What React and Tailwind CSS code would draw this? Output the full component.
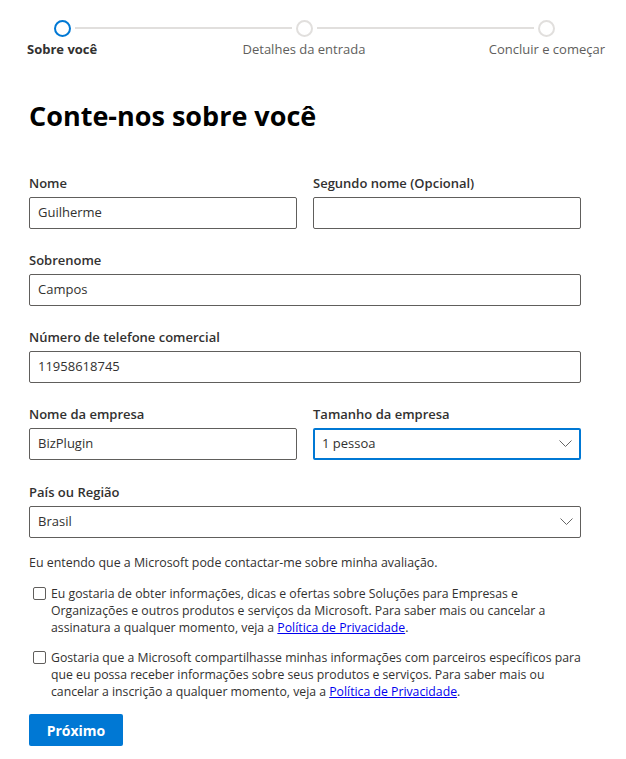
import React from "react";

const font = { fontFamily: '"Segoe UI", "Open Sans", "Noto Sans", sans-serif' };

function Chevron() {
  return (
    <svg width="13" height="8" viewBox="0 0 13 8" className="absolute right-[7px] top-1/2 -translate-y-1/2">
      <path d="M0.5 0.5 L6.5 6.5 L12.5 0.5" fill="none" stroke="#666" strokeWidth="1" />
    </svg>
  );
}

function Field({ label, value, className = "" }) {
  return (
    <div className={"flex flex-col " + className}>
      <label className="text-[13px] font-semibold text-[#323130] leading-[18px] mb-[5px]">{label}</label>
      <div className="h-[32px] border border-[#605e5c] rounded-[2px] flex items-center px-[8px] text-[13px] text-[#323130]">
        {value}
      </div>
    </div>
  );
}

function SelectField({ label, value, focused, className = "" }) {
  return (
    <div className={"flex flex-col " + className}>
      <label className="text-[13px] font-semibold text-[#323130] leading-[18px] mb-[5px]">{label}</label>
      <div
        className={
          "relative h-[32px] rounded-[2px] flex items-center text-[13px] text-[#323130] " +
          (focused ? "border-2 border-[#0078d4] px-[7px]" : "border border-[#605e5c] px-[8px]")
        }
      >
        {value}
        <Chevron />
      </div>
    </div>
  );
}

function Checkbox() {
  return <span className="mt-[2px] shrink-0 w-[13px] h-[13px] border border-[#605e5c] rounded-[2px] bg-white" />;
}

export default function App() {
  return (
    <div className="bg-white w-[626px] h-[759px] overflow-hidden text-[#323130]" style={font}>
      {/* Stepper */}
      <div className="pt-[19px] pl-[27px] pr-[21px]">
        <div className="h-[18px] ml-[27px] mr-[50px]">
          <div className="flex items-center h-[18px]">
            <span className="w-[17px] h-[17px] rounded-full border-2 border-[#0078d4] shrink-0" />
            <span className="flex-1 h-[2px] bg-[#e1dfdd] mx-[4px]" />
            <span className="w-[17px] h-[17px] rounded-full border-2 border-[#e1dfdd] shrink-0" />
            <span className="flex-1 h-[2px] bg-[#e1dfdd] mx-[4px]" />
            <span className="w-[17px] h-[17px] rounded-full border-2 border-[#e1dfdd] shrink-0" />
          </div>
        </div>
        <div className="flex justify-between mt-[3px] text-[13px] leading-[18px] text-[#605e5c]">
          <span className="font-bold text-[#323130]">Sobre você</span>
          <span className="ml-[22px]">Detalhes da entrada</span>
          <span>Concluir e começar</span>
        </div>
      </div>

      <div className="ml-[29px] w-[552px]">
        <h1 className="mt-[40px] text-[27px] font-bold leading-[36px] text-black">Conte-nos sobre você</h1>

        <div className="mt-[40px] grid grid-cols-2 gap-x-[16px]">
          <Field label="Nome" value="Guilherme" />
          <Field label="Segundo nome (Opcional)" value="" />
        </div>
        <Field label="Sobrenome" value="Campos" className="mt-[22px]" />
        <Field label="Número de telefone comercial" value="11958618745" className="mt-[22px]" />
        <div className="mt-[22px] grid grid-cols-2 gap-x-[16px]">
          <Field label="Nome da empresa" value="BizPlugin" />
          <SelectField label="Tamanho da empresa" value="1 pessoa" focused />
        </div>
        <SelectField label="País ou Região" value="Brasil" className="mt-[23px]" />

        <p className="mt-[16px] text-[12.4px] leading-[18px]">
          Eu entendo que a Microsoft pode contactar-me sobre minha avaliação.
        </p>

        <div className="mt-[13px] flex gap-[5px] pl-[4px]">
          <Checkbox />
          <p className="text-[12.25px] leading-[17px]">
            Eu gostaria de obter informações, dicas e ofertas sobre Soluções para Empresas e Organizações e outros
            produtos e serviços da Microsoft. Para saber mais ou cancelar a assinatura a qualquer momento, veja a{" "}
            <a className="text-[#0000ee] underline">Política de Privacidade</a>.
          </p>
        </div>
        <div className="mt-[13px] flex gap-[5px] pl-[4px]">
          <Checkbox />
          <p className="text-[12.25px] leading-[17px]">
            Gostaria que a Microsoft compartilhasse minhas informações com parceiros específicos para que eu possa
            receber informações sobre seus produtos e serviços. Para saber mais ou cancelar a inscrição a qualquer
            momento, veja a <a className="text-[#0000ee] underline">Política de Privacidade</a>.
          </p>
        </div>

        <button className="mt-[14px] w-[94px] h-[32px] bg-[#0078d4] rounded-[2px] text-white text-[14px] font-bold">
          Próximo
        </button>
      </div>
    </div>
  );
}
